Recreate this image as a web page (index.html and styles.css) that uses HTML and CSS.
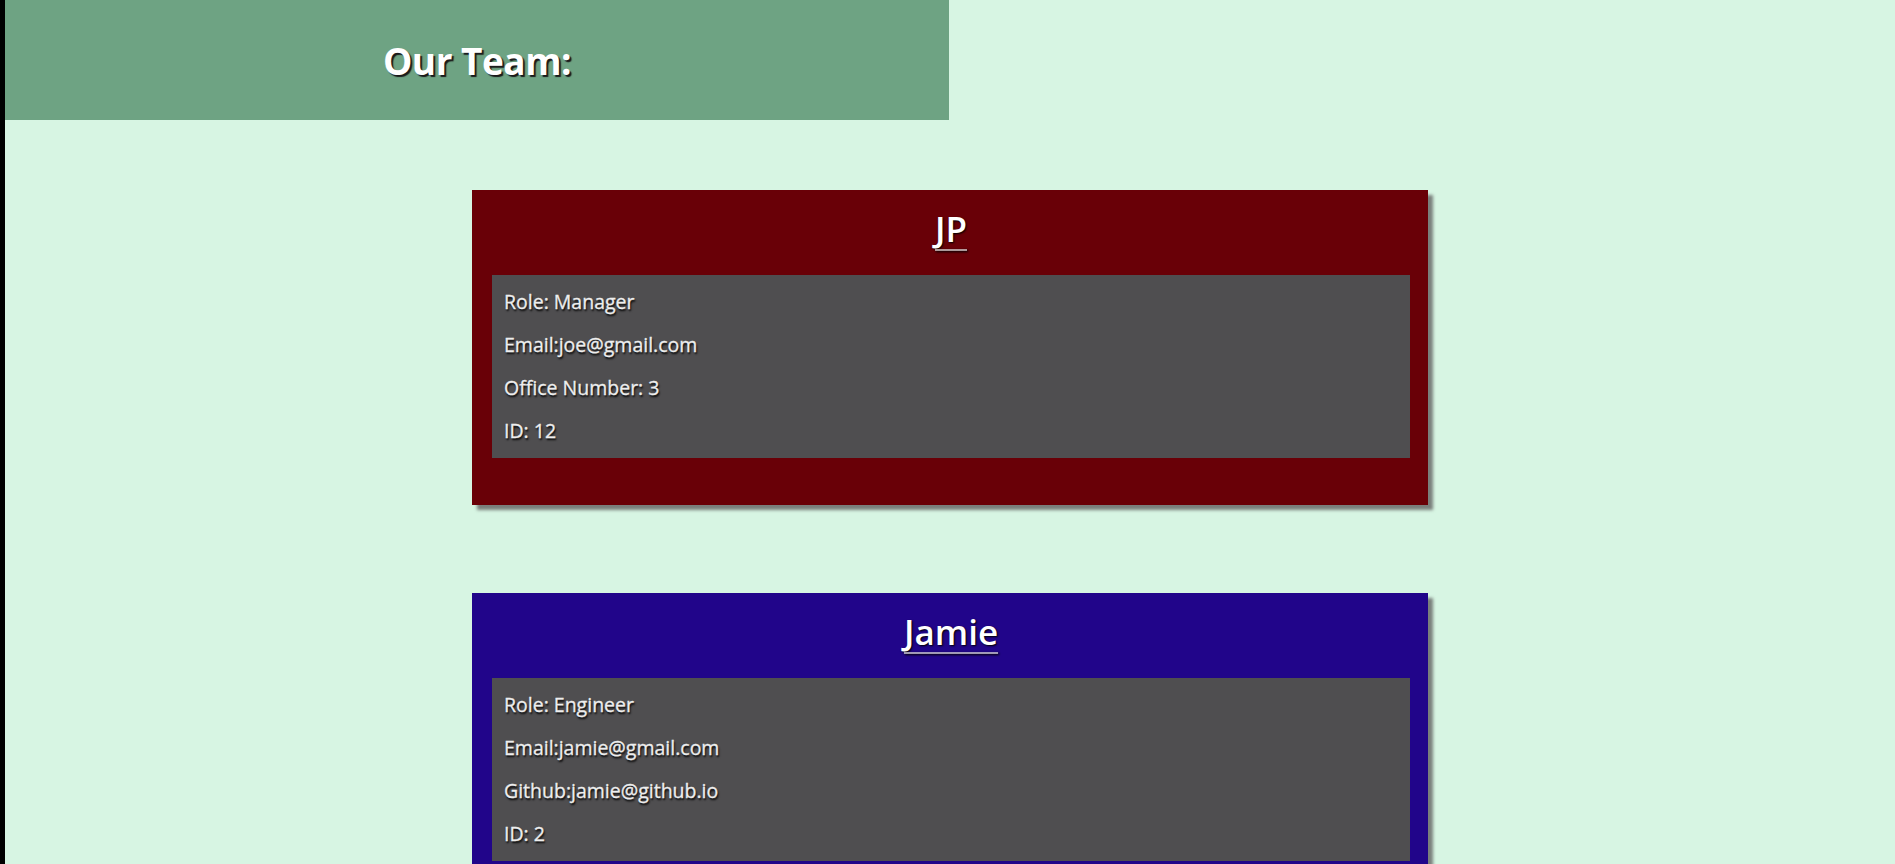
FILE: index.html
```html
<!DOCTYPE html>
<html lang="en">
<head>
<meta charset="utf-8">
<title>Our Team</title>
<link rel="stylesheet" href="styles.css">
</head>
<body>
<div class="page">
  <header class="banner">
    <h1 class="banner-title">Our Team:</h1>
  </header>
  <main class="team">
    <section class="card card-manager">
      <h2 class="card-name">JP</h2>
      <div class="card-info">
        <p>Role: Manager</p>
        <p>Email:joe@gmail.com</p>
        <p>Office Number: 3</p>
        <p>ID: 12</p>
      </div>
    </section>
    <section class="card card-engineer">
      <h2 class="card-name">Jamie</h2>
      <div class="card-info">
        <p>Role: Engineer</p>
        <p>Email:jamie@gmail.com</p>
        <p>Github:jamie@github.io</p>
        <p>ID: 2</p>
      </div>
    </section>
  </main>
</div>
</body>
</html>
```
FILE: styles.css
```css
html, body {
  margin: 0;
  padding: 0;
}

body {
  background: #000;
  font-family: "Open Sans", "Noto Sans", sans-serif;
  overflow: hidden;
}

.page {
  margin-left: 5px;
  min-height: 864px;
  background: #d7f5e3;
}

.banner {
  width: 944px;
  height: 120px;
  background: #6ea383;
  display: flex;
  align-items: center;
  justify-content: center;
}

.banner-title {
  margin: 0;
  font-size: 37px;
  font-weight: 700;
  color: #fff;
  text-shadow: 2px 2px 1px #1a1a1a;
  letter-spacing: -0.5px;
}

.team {
  display: flex;
  flex-direction: column;
  align-items: center;
  gap: 88px;
  padding-top: 70px;
}

.card {
  width: 956px;
  box-sizing: border-box;
  padding: 0 18px 47px 20px;
  box-shadow: 5px 5px 3px #7a7f7c;
}

.card-manager {
  background: #690007;
}

.card-engineer {
  background: #21058a;
}

.card-name {
  margin: 0 0 26px;
  padding-top: 19px;
  line-height: 40px;
  font-size: 35px;
  font-weight: 600;
  text-align: center;
  color: #fff;
  text-decoration: underline;
  text-decoration-thickness: 2px;
  text-underline-offset: 7px;
  text-decoration-skip-ink: none;
  text-decoration-color: rgba(255, 255, 255, 0.6);
  text-shadow: 1px 1px 2px #000;
}

.card-info {
  background: #4f4e50;
  padding: 5px 12px 6px;
}

.card-info p {
  margin: 0;
  font-size: 19.5px;
  line-height: 43px;
  color: #eeeeee;
  text-shadow: 1px 2px 2px #000;
  -webkit-text-stroke: 0.3px #eeeeee;
}
```
